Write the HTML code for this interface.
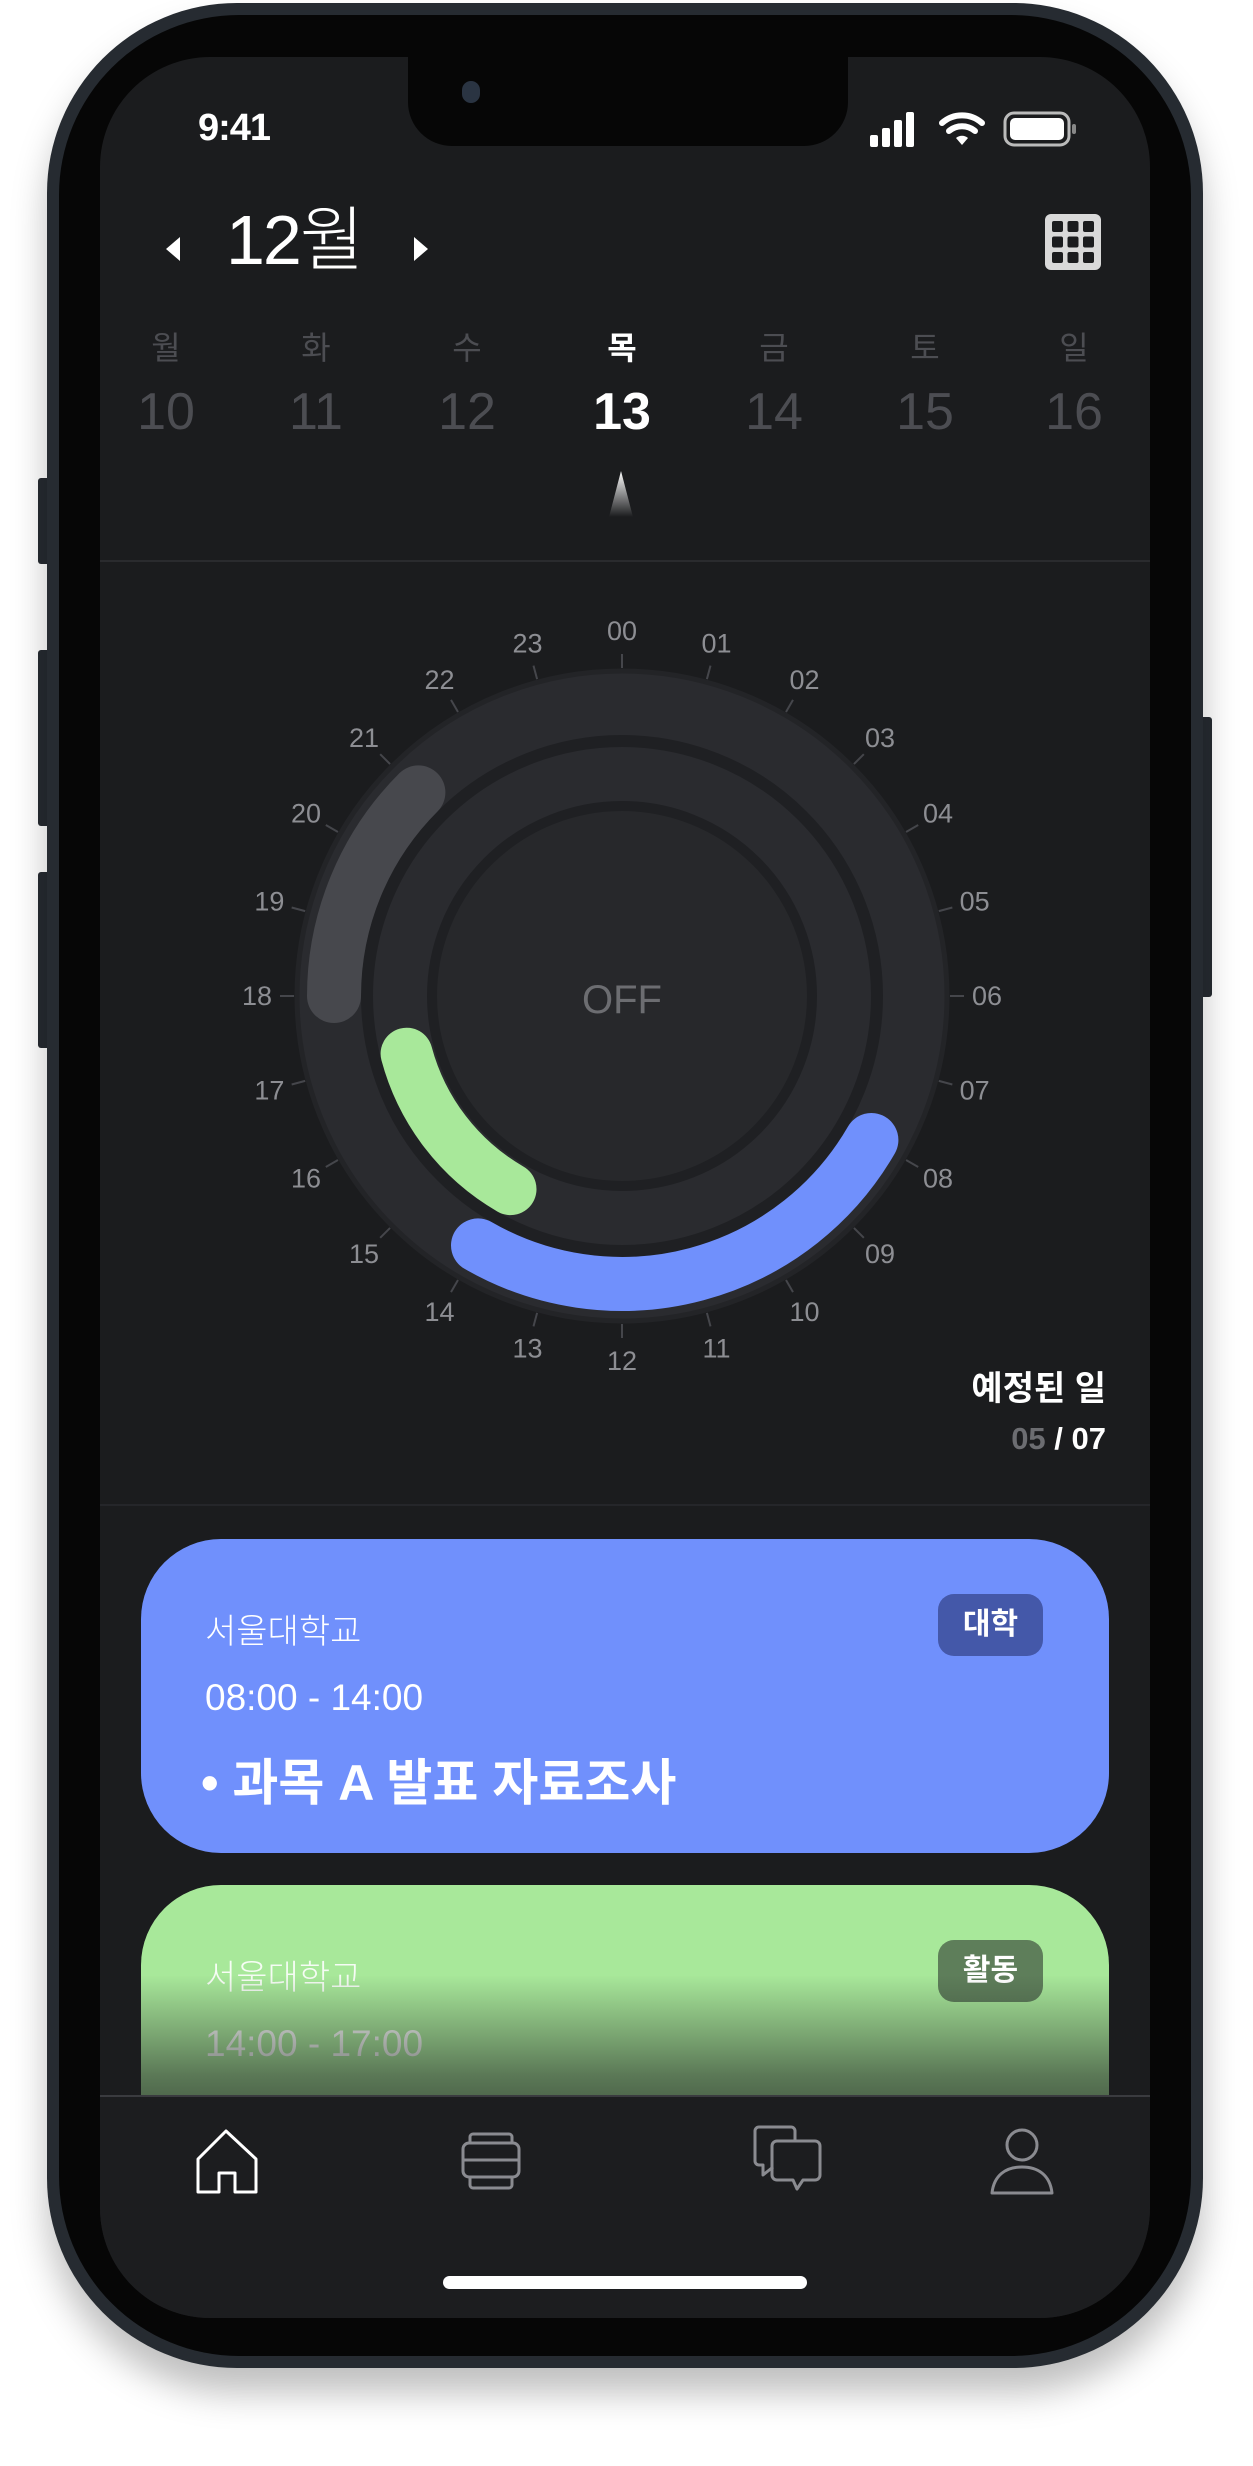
<!DOCTYPE html>
<html><head><meta charset="utf-8">
<style>
*{margin:0;padding:0;box-sizing:border-box}
body{width:1253px;height:2466px;background:#fff;position:relative;overflow:hidden;font-family:"Liberation Sans","Noto Sans CJK KR",sans-serif}
.abs{position:absolute}
.body{left:47px;top:3px;width:1156px;height:2365px;border-radius:190px;background:#262b31;box-shadow:0 25px 35px rgba(0,0,0,.25)}
.bezel{left:59px;top:15px;width:1132px;height:2341px;border-radius:180px;background:#060606}
.screen{left:100px;top:57px;width:1050px;height:2261px;border-radius:110px;background:#1b1c1e;overflow:hidden}
.notch{left:308px;top:-5px;width:440px;height:94px;background:#060606;border-radius:0 0 44px 44px}
.btn{background:#262b31;border-radius:3px}
.w{color:#fff}
.day{position:absolute;width:100px;text-align:center;color:#4c4d52}
</style></head><body>
<div class="abs btn" style="left:38px;top:478px;width:12px;height:86px"></div>
<div class="abs btn" style="left:38px;top:650px;width:12px;height:176px"></div>
<div class="abs btn" style="left:38px;top:872px;width:12px;height:176px"></div>
<div class="abs btn" style="left:1200px;top:717px;width:12px;height:280px"></div>
<div class="abs body"></div>
<div class="abs bezel"></div>
<div class="abs screen">
  <div class="abs notch"></div>
  <div class="abs" style="left:362px;top:24px;width:18px;height:22px;border-radius:9px;background:#2a3442"></div>
  <div class="abs w" style="left:98px;top:50px;font-size:38px;font-weight:bold;letter-spacing:-1px">9:41</div>
  <svg class="abs" style="left:768px;top:52px" width="210" height="40" viewBox="0 0 210 40">
    <rect x="2" y="26" width="8" height="12" rx="2" fill="#fff"/>
    <rect x="14" y="19" width="8" height="19" rx="2" fill="#fff"/>
    <rect x="26" y="11" width="8" height="27" rx="2" fill="#fff"/>
    <rect x="38" y="3" width="8" height="35" rx="2" fill="#fff"/>
    <path d="M74 14 a30 30 0 0 1 40 0" stroke="#fff" stroke-width="6" fill="none" stroke-linecap="round"/>
    <path d="M81 22 a20 20 0 0 1 26 0" stroke="#fff" stroke-width="6" fill="none" stroke-linecap="round"/>
    <path d="M88 29 L94 36 L100 29 a9 9 0 0 0 -12 0z" fill="#fff"/>
    <rect x="137" y="4" width="64" height="32" rx="9" fill="none" stroke="#bbb" stroke-width="3"/>
    <rect x="142" y="9" width="54" height="22" rx="5" fill="#fff"/>
    <rect x="204" y="15" width="4" height="10" rx="2" fill="#888"/>
  </svg>
  <svg class="abs" style="left:58px;top:172px" width="30" height="40"><path d="M22 8 L8 20 L22 32z" fill="#fff"/></svg>
  <div class="abs w" style="left:126px;top:143px;font-size:70px;font-weight:300;letter-spacing:-2px;line-height:80px">12월</div>
  <svg class="abs" style="left:306px;top:172px" width="30" height="40"><path d="M8 8 L22 20 L8 32z" fill="#fff"/></svg>
  <svg class="abs" style="left:945px;top:157px" width="56" height="56" viewBox="0 0 56 56">
    <rect x="0" y="0" width="56" height="56" rx="6" fill="#d9d9d9"/>
    <g fill="#1b1c1e"><rect x="7" y="7" width="11" height="11" rx="2"/><rect x="22.5" y="7" width="11" height="11" rx="2"/><rect x="38" y="7" width="11" height="11" rx="2"/><rect x="7" y="22.5" width="11" height="11" rx="2"/><rect x="22.5" y="22.5" width="11" height="11" rx="2"/><rect x="38" y="22.5" width="11" height="11" rx="2"/><rect x="7" y="38" width="11" height="11" rx="2"/><rect x="22.5" y="38" width="11" height="11" rx="2"/><rect x="38" y="38" width="11" height="11" rx="2"/></g>
  </svg>
  <div class="day" style="left:16px;top:266px;font-size:32px">월</div>
  <div class="day" style="left:166px;top:266px;font-size:32px">화</div>
  <div class="day" style="left:317px;top:266px;font-size:32px">수</div>
  <div class="day" style="left:472px;top:266px;font-size:32px;color:#fff;font-weight:bold">목</div>
  <div class="day" style="left:624px;top:266px;font-size:32px">금</div>
  <div class="day" style="left:775px;top:266px;font-size:32px">토</div>
  <div class="day" style="left:924px;top:266px;font-size:32px">일</div>
  <div class="day" style="left:16px;top:325px;font-size:52px;font-weight:300">10</div>
  <div class="day" style="left:166px;top:325px;font-size:52px;font-weight:300">11</div>
  <div class="day" style="left:317px;top:325px;font-size:52px;font-weight:300">12</div>
  <div class="day" style="left:472px;top:325px;font-size:52px;color:#fff;font-weight:bold">13</div>
  <div class="day" style="left:624px;top:325px;font-size:52px;font-weight:300">14</div>
  <div class="day" style="left:775px;top:325px;font-size:52px;font-weight:300">15</div>
  <div class="day" style="left:924px;top:325px;font-size:52px;font-weight:300">16</div>
  <svg class="abs" style="left:505px;top:412px" width="32" height="50"><defs><linearGradient id="tg" x1="0" y1="0" x2="0" y2="1"><stop offset="0" stop-color="#fff"/><stop offset="1" stop-color="#fff" stop-opacity="0"/></linearGradient></defs><path d="M16 2 L28 48 L4 48z" fill="url(#tg)"/></svg>
  <div class="abs" style="left:0;top:503px;width:1050px;height:2px;background:#2a2b2e"></div>
  <svg class="abs" style="left:-100px;top:-57px" width="1253" height="1600" viewBox="0 0 1253 1600">
    <g fill="#8d8e93" font-size="27" font-family="Liberation Sans,sans-serif" text-anchor="middle" dominant-baseline="central">
      <text x="622" y="631">00</text><text x="716.5" y="643.4">01</text><text x="804.5" y="680">02</text><text x="880" y="738">03</text><text x="938" y="813.5">04</text><text x="974.6" y="901.5">05</text><text x="987" y="996">06</text><text x="974.6" y="1090.5">07</text><text x="938" y="1178.5">08</text><text x="880" y="1254">09</text><text x="804.5" y="1312">10</text><text x="716.5" y="1348.6">11</text><text x="622" y="1361">12</text><text x="527.5" y="1348.6">13</text><text x="439.5" y="1312">14</text><text x="364" y="1254">15</text><text x="306" y="1178.5">16</text><text x="269.4" y="1090.5">17</text><text x="257" y="996">18</text><text x="269.4" y="901.5">19</text><text x="306" y="813.5">20</text><text x="364" y="738">21</text><text x="439.5" y="680">22</text><text x="527.5" y="643.4">23</text>
    </g>
    <g stroke="#45464b" stroke-width="2">
      <line x1="622" y1="668" x2="622" y2="654" transform="rotate(0 622 996)"/><line x1="622" y1="668" x2="622" y2="654" transform="rotate(15 622 996)"/><line x1="622" y1="668" x2="622" y2="654" transform="rotate(30 622 996)"/><line x1="622" y1="668" x2="622" y2="654" transform="rotate(45 622 996)"/><line x1="622" y1="668" x2="622" y2="654" transform="rotate(60 622 996)"/><line x1="622" y1="668" x2="622" y2="654" transform="rotate(75 622 996)"/><line x1="622" y1="668" x2="622" y2="654" transform="rotate(90 622 996)"/><line x1="622" y1="668" x2="622" y2="654" transform="rotate(105 622 996)"/><line x1="622" y1="668" x2="622" y2="654" transform="rotate(120 622 996)"/><line x1="622" y1="668" x2="622" y2="654" transform="rotate(135 622 996)"/><line x1="622" y1="668" x2="622" y2="654" transform="rotate(150 622 996)"/><line x1="622" y1="668" x2="622" y2="654" transform="rotate(165 622 996)"/><line x1="622" y1="668" x2="622" y2="654" transform="rotate(180 622 996)"/><line x1="622" y1="668" x2="622" y2="654" transform="rotate(195 622 996)"/><line x1="622" y1="668" x2="622" y2="654" transform="rotate(210 622 996)"/><line x1="622" y1="668" x2="622" y2="654" transform="rotate(225 622 996)"/><line x1="622" y1="668" x2="622" y2="654" transform="rotate(240 622 996)"/><line x1="622" y1="668" x2="622" y2="654" transform="rotate(255 622 996)"/><line x1="622" y1="668" x2="622" y2="654" transform="rotate(270 622 996)"/><line x1="622" y1="668" x2="622" y2="654" transform="rotate(285 622 996)"/><line x1="622" y1="668" x2="622" y2="654" transform="rotate(300 622 996)"/><line x1="622" y1="668" x2="622" y2="654" transform="rotate(315 622 996)"/><line x1="622" y1="668" x2="622" y2="654" transform="rotate(330 622 996)"/><line x1="622" y1="668" x2="622" y2="654" transform="rotate(345 622 996)"/>
    </g>
    <circle cx="622" cy="996" r="325" fill="#2a2b2f" stroke="#232427" stroke-width="5"/>
    <circle cx="622" cy="996" r="255" fill="none" stroke="#1f2023" stroke-width="12"/>
    <circle cx="622" cy="996" r="190" fill="#27282b" stroke="#1f2023" stroke-width="10"/>
    <text x="622" y="1000" fill="#6c6d71" font-size="40" font-family="Liberation Sans,sans-serif" text-anchor="middle" dominant-baseline="central">OFF</text>
    <path d="M334 996 A288 288 0 0 1 418.4 792.4" stroke="#47484d" stroke-width="54" fill="none" stroke-linecap="round"/>
    <path d="M510.5 1189.1 A223 223 0 0 1 406.6 1053.7" stroke="#a8e89a" stroke-width="52" fill="none" stroke-linecap="round"/>
    <path d="M871.4 1140 A288 288 0 0 1 478 1245.4" stroke="#7090fc" stroke-width="54" fill="none" stroke-linecap="round"/>
  </svg>
  <div class="abs w" style="right:44px;top:1304px;font-size:34px;font-weight:bold">예정된 일</div>
  <div class="abs w" style="right:44px;top:1364px;font-size:31px;font-weight:bold"><span style="color:#6c6d71">05</span> / 07</div>
  <div class="abs" style="left:0;top:1447px;width:1050px;height:2px;background:#25262a"></div>
  <div class="abs" style="left:41px;top:1482px;width:968px;height:314px;border-radius:80px;background:#7090fc">
    <div class="abs w" style="left:64px;top:65px;font-size:34px;font-weight:300">서울대학교</div>
    <div class="abs w" style="left:64px;top:138px;font-size:37px;font-weight:300">08:00 - 14:00</div>
    <div class="abs w" style="left:60px;top:204px;font-size:50px;font-weight:bold">• 과목 A 발표 자료조사</div>
    <div class="abs w" style="left:797px;top:55px;width:105px;height:62px;border-radius:16px;background:#4458a9;font-size:30px;font-weight:bold;text-align:center;line-height:62px">대학</div>
  </div>
  <div class="abs" style="left:41px;top:1828px;width:968px;height:314px;border-radius:80px;background:#a8e89a;overflow:hidden">
    <div class="abs w" style="left:64px;top:65px;font-size:34px;font-weight:300;opacity:.9">서울대학교</div>
    <div class="abs w" style="left:64px;top:138px;font-size:37px;font-weight:300;opacity:.9">14:00 - 17:00</div>
    <div class="abs w" style="left:797px;top:55px;width:105px;height:62px;border-radius:16px;background:#5e7e5a;font-size:30px;font-weight:bold;text-align:center;line-height:62px">활동</div>
    <div class="abs" style="left:0;top:90px;width:968px;height:224px;background:linear-gradient(to bottom,rgba(27,28,30,0) 0%,rgba(27,28,30,.55) 45%,rgba(27,28,30,1) 100%)"></div>
  </div>
  <div class="abs" style="left:0;top:2038px;width:1050px;height:223px;background:#1c1d1f;border-top:2px solid #3a3b3f"></div>
  <svg class="abs" style="left:93px;top:2070px" width="70" height="70" viewBox="0 0 70 70"><path d="M5 65 V32 L33 4 L63 32 V65 H42 V46 H26 V65 Z" fill="none" stroke="#fff" stroke-width="3" stroke-linejoin="round"/></svg>
  <svg class="abs" style="left:358px;top:2072px" width="66" height="66" viewBox="0 0 66 66"><rect x="5" y="14" width="56" height="34" rx="6" fill="none" stroke="#8a8b90" stroke-width="3"/><path d="M12 14 V8 a3 3 0 0 1 3-3 H51 a3 3 0 0 1 3 3 V14 M12 48 V56 a3 3 0 0 0 3 3 H51 a3 3 0 0 0 3-3 V48 M5 31 H61" fill="none" stroke="#8a8b90" stroke-width="3"/></svg>
  <svg class="abs" style="left:651px;top:2066px" width="74" height="74" viewBox="0 0 74 74"><path d="M44 18 V8 a4 4 0 0 0-4-4 H8 a4 4 0 0 0-4 4 V38 a4 4 0 0 0 4 4 H12 V52 L22 44" fill="none" stroke="#8a8b90" stroke-width="3" stroke-linejoin="round"/><path d="M26 18 H64 a5 5 0 0 1 5 5 V52 a5 5 0 0 1-5 5 H52 L46 66 L42 57 H26 a5 5 0 0 1-5-5 V23 a5 5 0 0 1 5-5 Z" fill="none" stroke="#8a8b90" stroke-width="3" stroke-linejoin="round"/></svg>
  <svg class="abs" style="left:888px;top:2068px" width="68" height="72" viewBox="0 0 68 72"><circle cx="34" cy="20" r="15" fill="none" stroke="#8a8b90" stroke-width="3"/><path d="M4 68 C6 50 18 42 34 42 C50 42 62 50 64 68 Z" fill="none" stroke="#8a8b90" stroke-width="3" stroke-linejoin="round"/></svg>
  <div class="abs" style="left:343px;top:2219px;width:364px;height:13px;border-radius:7px;background:#fff"></div>
</div>
</body></html>
